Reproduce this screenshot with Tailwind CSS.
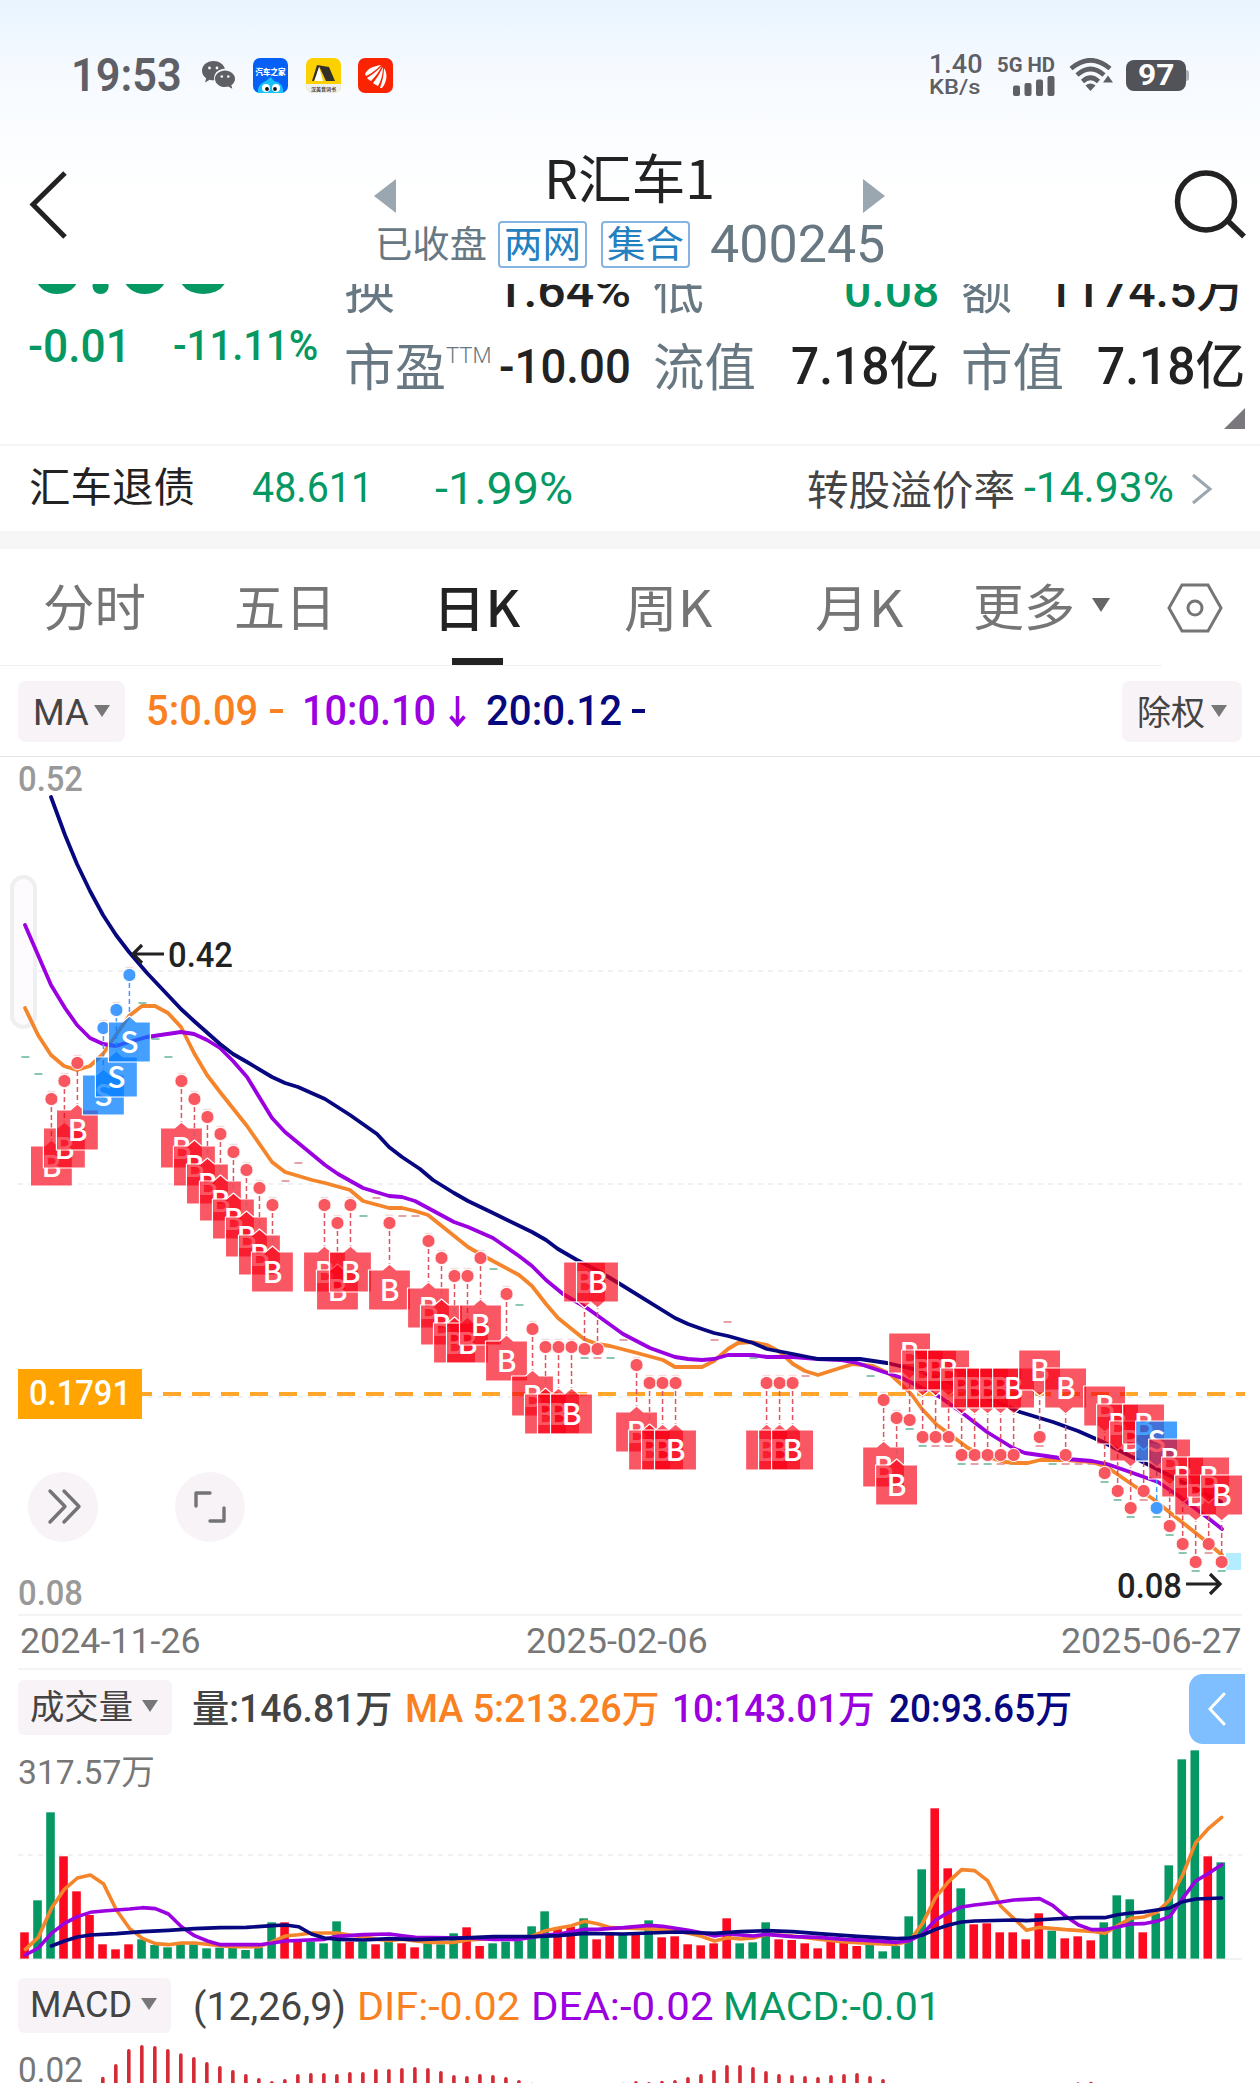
<!DOCTYPE html>
<html lang="zh-CN">
<head>
  <meta charset="UTF-8" />
  <meta name="viewport" content="width=device-width, initial-scale=1.0"/>
  <title>R汇车1 400245</title>
  <script src="https://cdn.jsdelivr.net/npm/@tailwindcss/browser@4"></script>
  <style>
    body {
      font-family: Roboto, 'Noto Sans CJK SC', sans-serif;
    }
    .cjk {
      font-family: 'Noto Sans CJK SC', sans-serif;
    }
    [data-w] {
      display: inline-block;
      white-space: nowrap;
      transform-origin: left center;
      flex-shrink: 0;
    }
  </style>
</head>
<body class="bg-white w-[1260px] h-[2083px] overflow-hidden text-[#222]">

  <!-- Status bar + title -->
  <header class="h-[284px] bg-linear-to-b from-[#e8f4ff] via-[#f6faff] via-25% to-white to-70%">
    <div class="flex items-center h-[150px] text-[#5f5f66]">
      <span data-w="111" class="ml-[71px] text-[46px] leading-none font-semibold">19:53</span>
      <svg class="ml-[20px] w-[33px] h-[28px]" viewBox="0 0 33 28" fill="#5f5f66">
        <path d="M11.500 0C5 0 0 4.300 0 9.700c0 3 1.600 5.700 4.200 7.500L3 21.500l4.700-2.700c1.200.4 2.500.5 3.800.5h.8c-1.300-6.500 4-11.600 10.600-11.500C21.800 3.300 17 0 11.500 0z"/>
        <path d="M33 17.700c0-4.600-4.500-8.300-10-8.300s-10 3.700-10 8.300 4.500 8.300 10 8.300c1.200 0 2.300-.2 3.300-.5l4 2.300-1-3.700c2.300-1.500 3.700-3.800 3.700-6.400z"/>
        <g fill="#f6faff"><circle cx="7.500" cy="7" r="1.400"/><circle cx="15" cy="7" r="1.400"/><circle cx="19.800" cy="15.500" r="1.300"/><circle cx="26.300" cy="15.500" r="1.300"/></g>
      </svg>
      <svg class="ml-[18px] w-[35px] h-[35px]" viewBox="0 0 35 35">
        <rect width="35" height="35" rx="7" fill="#0561f5"/>
        <text x="2.500" y="16.500" font-size="8" font-weight="900" fill="#fff" textLength="30" lengthAdjust="spacingAndGlyphs">汽车之家</text>
        <path d="M5 35c-1-8 5-11 8-12l4.500-4L21 23c5 1 10 4 9 12z" fill="#17c0f8"/>
        <circle cx="13" cy="30" r="4" fill="#fff"/><circle cx="23" cy="30" r="4" fill="#fff"/>
        <circle cx="14" cy="31" r="1.900" fill="#111"/><circle cx="22" cy="31" r="1.900" fill="#111"/>
      </svg>
      <svg class="ml-[18px] w-[35px] h-[35px]" viewBox="0 0 35 35">
        <rect width="35" height="35" rx="7" fill="#fdd000"/>
        <path d="M0 26h35v2a7 7 0 0 1-7 7H7a7 7 0 0 1-7-7z" fill="#efefef"/>
        <path d="M6 23L11 7l12 2 6 14h-9L13.500 9 8 23z" fill="#33302a"/>
        <path d="M8.500 23l4.500-14 4 14z" fill="#fff"/>
        <text x="5" y="33" font-size="5" font-weight="700" fill="#444" textLength="25" lengthAdjust="spacingAndGlyphs">汉英音词书</text>
      </svg>
      <svg class="ml-[17px] w-[35px] h-[35px]" viewBox="0 0 35 35">
        <rect width="35" height="35" rx="7" fill="#fa2403"/>
        <g fill="#fff">
          <path d="M7 16c2-5 8-8 16-9-4 4-10 9-15 11z"/>
          <path d="M9 20c5-3 10-7 15-12-3 6-7 11-11 15-2-1-3-2-4-3z"/>
          <path d="M15 25c4-5 7-10 10-16 0 7-2 14-5 19-2-1-4-2-5-3z"/>
          <path d="M22 30c2-6 4-13 4-20 4 6 3 14-2 20z"/>
        </g>
      </svg>
      <div class="ml-[536px] w-[54px] flex flex-col items-start font-medium">
        <span data-w="54" class="text-[26px] leading-[25px]">1.40</span>
        <span data-w="52" class="text-[21px] leading-[21px]">KB/s</span>
      </div>
      <div class="ml-[14px] w-[58px] flex flex-col">
        <span data-w="58" class="self-start text-[21px] leading-[20px] font-bold">5G HD</span>
        <svg class="ml-[16px] w-[42px] h-[20px] mt-[1px]" viewBox="0 0 42 20" fill="#5f5f66">
          <rect x="0" y="9.500" width="7" height="10.500" rx="2"/><rect x="11.500" y="7" width="7" height="13" rx="2"/>
          <rect x="23" y="3.500" width="7" height="16.500" rx="2"/><rect x="34.500" y="0" width="7" height="20" rx="2"/>
        </svg>
      </div>
      <svg class="ml-[14px] w-[44px] h-[34px]" viewBox="0 0 44 34" fill="none" stroke="#5f5f66" stroke-width="4.600">
        <path d="M2 10.500Q21.500-6 41 10.500"/>
        <path d="M8 17Q21.500 5 35 17"/>
        <path d="M13.500 23.500q8-7.500 16 0"/>
        <path d="M16.500 27.500q5-4 10 0L21.500 33z" fill="#5f5f66" stroke="none"/>
        <path d="M34 24.500l5-7 5 7z" fill="#5f5f66" stroke="none"/>
      </svg>
      <div class="ml-[13px] w-[60px] h-[31px] rounded-[8px] bg-[#525259] flex items-center text-white">
        <span data-w="36" class="ml-[12px] text-[30px] leading-none font-bold">97</span>
      </div>
      <div class="w-[3px] h-[11px] rounded-r-[3px] bg-[#aeb0b8]"></div>
    </div>

    <div class="flex items-start h-[134px] px-[28px]">
      <svg class="mt-[20px] w-[42px] h-[70px] shrink-0" viewBox="28 170 42 70" fill="none" stroke="#222" stroke-width="5">
        <path d="M65 173L33 204.500 65 237"/>
      </svg>
      <div class="ml-[304px] w-[512px] shrink-0 flex flex-col">
        <div class="flex h-[66px]">
          <svg class="mt-[29px] w-[22px] h-[34px] shrink-0" viewBox="0 0 22 34"><path d="M22 0v34L0 17z" fill="#9aa6b0"/></svg>
          <span data-w="171" class="cjk ml-[148px] -mt-[4px] text-[53px] leading-[60px]">R汇车1</span>
          <svg class="ml-[148px] mt-[29px] w-[22px] h-[34px] shrink-0" viewBox="0 0 22 34"><path d="M0 0v34l22-17z" fill="#9aa6b0"/></svg>
        </div>
        <div class="flex items-center h-[56px] text-[#687882]">
          <span data-w="112" class="mt-[2px] ml-[1px] text-[37px] leading-none">已收盘</span>
          <span class="ml-[11px] w-[89px] h-[47px] shrink-0 flex items-center rounded-[4px] border-2 border-[#86b4e2] text-[#2580c0]"><span data-w="77" class="ml-[4px] mt-[2px] text-[37px] leading-none">两网</span></span>
          <span class="ml-[14px] w-[89px] h-[47px] shrink-0 flex items-center rounded-[4px] border-2 border-[#86b4e2] text-[#2580c0]"><span data-w="77" class="ml-[4px] mt-[2px] text-[37px] leading-none">集合</span></span>
          <span data-w="175" class="mt-[1px] ml-[20px] text-[52px] leading-none">400245</span>
        </div>
      </div>
      <svg class="ml-auto mt-[18px] -mr-[16px] w-[76px] h-[72px] shrink-0" viewBox="1173 168 76 72" fill="none" stroke="#222" stroke-width="5.500">
        <circle cx="1207" cy="201.500" r="28.500"/><path d="M1229 221l16 15.500"/>
      </svg>
    </div>
  </header>

  <!-- Quote numbers, scrolled under the title -->
  <section class="flex h-[160px] overflow-hidden bg-white">
    <div class="w-[344px] shrink-0 pl-[28px] -mt-[83px] text-[#059862]">
      <div class="h-[110px]"><span data-w="204" class="text-[108px] leading-[110px] font-bold">0.08</span></div>
      <div class="mt-[5px] h-[60px] flex items-center font-medium">
        <span data-w="103" class="text-[46px] leading-none">-0.01</span>
        <span data-w="145" class="ml-[42px] text-[42px] leading-none">-11.11%</span>
      </div>
    </div>
    <div class="relative -mt-[32px] grid grid-cols-[287px_286px_284px] grid-rows-[77px_77px] gap-x-[22px] h-[190px] leading-none text-[46px] font-medium">
      <div class="flex items-center justify-between"><span class="mt-[2px] text-[51px] font-normal text-[#687882]">换</span><span data-w="136">1.64%</span></div>
      <div class="flex items-center justify-between"><span class="mt-[2px] text-[51px] font-normal text-[#687882]">低</span><span data-w="95" class="text-[#059862]">0.08</span></div>
      <div class="flex items-center justify-between"><span class="mt-[2px] text-[51px] font-normal text-[#687882]">额</span><span data-w="199">1174.5万</span></div>
      <div class="flex items-center"><span data-w="102" class="mt-[2px] text-[51px] font-normal text-[#687882]">市盈</span><span data-w="45" class="-mt-[24px] text-[22px] font-light text-[#687882]">TTM</span><span data-w="132" class="-mt-[2px] ml-auto text-[48px]">-10.00</span></div>
      <div class="flex items-center"><span data-w="103" class="mt-[2px] text-[51px] font-normal text-[#687882]">流值</span><span data-w="148" class="-mt-[2px] ml-auto text-[51px]">7.18亿</span></div>
      <div class="flex items-center"><span data-w="103" class="mt-[2px] text-[51px] font-normal text-[#687882]">市值</span><span data-w="148" class="-mt-[2px] ml-auto mr-[-2px] text-[51px]">7.18亿</span></div>
      <svg class="absolute right-0 top-[156px] w-[21px] h-[21px]" viewBox="0 0 21 21"><path d="M21 0v21H0z" fill="#7a787d"/></svg>
    </div>
  </section>

  <!-- Convertible bond -->
  <section class="flex items-center h-[87px] border-t-2 border-[#f5f5f5] leading-none text-[#059862]">
    <span data-w="166" class="ml-[29px] text-[41px] text-[#222]">汇车退债</span>
    <span data-w="121" class="-mt-[2px] ml-[57px] text-[42px]">48.611</span>
    <span data-w="138" class="ml-[62px] text-[45px]">-1.99%</span>
    <span data-w="208" class="mt-[5px] ml-[234px] text-[41px] text-[#444]">转股溢价率</span>
    <span data-w="150" class="-mt-[2px] ml-[9px] text-[42px]">-14.93%</span>
    <svg class="ml-[17px] w-[22px] h-[32px]" viewBox="0 0 22 32" fill="none" stroke="#9aa6b0" stroke-width="3"><path d="M2 2l17 14L2 30"/></svg>
  </section>
  <div class="h-[18px] bg-[#f6f6f6]"></div>

  <!-- Period tabs -->
  <nav class="flex items-center h-[117px] text-[50px] leading-none text-[#757575]">
    <span data-w="103" class="mt-[3px] ml-[43px]">分时</span>
    <span data-w="102" class="mt-[3px] ml-[88px]">五日</span>
    <div class="relative ml-[97px] w-[90px] h-[117px] shrink-0 flex items-center text-[#222] font-medium">
      <span data-w="87" class="cjk -mt-[5px]">日K</span>
      <div class="absolute left-[19px] bottom-[1px] w-[51px] h-[7px] bg-[#222]"></div>
    </div>
    <span data-w="88" class="cjk -mt-[5px] ml-[101px]">周K</span>
    <span data-w="88" class="cjk -mt-[5px] ml-[103px]">月K</span>
    <span data-w="102" class="mt-[3px] ml-[69px]">更多</span>
    <svg class="ml-[17px] -mt-[5px] w-[18px] h-[14px]" viewBox="0 0 18 14"><path d="M0 0h18L9 14z" fill="#666"/></svg>
    <svg class="ml-[57px] w-[56px] h-[50px]" viewBox="0 0 56 50" fill="none" stroke="#757575" stroke-width="3">
      <path d="M15 2h26l13 23-13 23H15L2 25z"/><circle cx="28" cy="25" r="7"/>
    </svg>
  </nav>
  <div class="w-[1162px] h-px -mt-px bg-[#f2f2f2]"></div>

  <!-- MA legend -->
  <section class="flex items-center h-[91px] border-b border-[#e3e3e3] leading-none text-[42px] font-medium">
    <div class="ml-[18px] w-[107px] h-[61px] rounded-[8px] bg-[#f7f3f7] flex items-center text-[#444] font-normal">
      <span data-w="56" class="mt-[2px] ml-[15px] text-[37px]">MA</span>
      <svg class="ml-[5px] w-[16px] h-[12px]" viewBox="0 0 16 12"><path d="M0 0h16L8 12z" fill="#777"/></svg>
    </div>
    <span data-w="112" class="ml-[21px] text-[#f98122]">5:0.09</span>
    <span class="ml-[12px] w-[13px] h-[4px] bg-[#f98122]"></span>
    <span data-w="134" class="ml-[19px] text-[#9a00e0]">10:0.10</span>
    <svg class="ml-[13px] w-[17px] h-[32px]" viewBox="0 0 17 32" fill="none" stroke="#9a00e0" stroke-width="3.500"><path d="M8.500 1v28M1.500 21.500l7 8 7-8"/></svg>
    <span data-w="136" class="ml-[20px] text-[#07077f]">20:0.12</span>
    <span class="ml-[10px] w-[13px] h-[4px] bg-[#07077f]"></span>
    <div class="ml-auto mr-[18px] w-[120px] h-[61px] rounded-[8px] bg-[#f7f3f7] flex items-center text-[#444] font-normal">
      <span data-w="68" class="mt-[3px] ml-[15px] text-[34px]">除权</span>
      <svg class="ml-[6px] w-[16px] h-[12px]" viewBox="0 0 16 12"><path d="M0 0h16L8 12z" fill="#777"/></svg>
    </div>
  </section>

  <!-- Price chart -->
  <svg class="block w-[1260px] h-[857px]" viewBox="0 757 1260 857" fill="none">
    <g stroke="#edf1f3" stroke-width="2" stroke-dasharray="5 5">
      <path d="M18 971H1242M18 1184H1242M18 1397H1242"/>
    </g>
    <rect x="12" y="877" width="23" height="150" rx="11.500" stroke="#efeff1" stroke-width="4" fill="#fdfbfe"/>
    <g id="ticks" stroke-width="1.500"></g>
    <g stroke-width="3.800" stroke-linejoin="round" stroke-linecap="round">
      <polyline stroke="#f5852b" points="25,1008 38,1035 51,1055 64,1066 77,1070 90,1066 103,1054 116,1035 129,1016 142,1006 155,1006 168,1013 181,1027 194,1053 207,1075 220,1092 247,1126 272,1162 285,1172 312,1180 325,1183 350,1190 363,1201 389,1208 402,1208 415,1211 428,1215 468,1247 480,1254 519,1275 532,1286 546,1304 558,1318 584,1339 597,1344 610,1346 637,1353 663,1360 675,1367 702,1367 714,1361 728,1349 738,1343 752,1342 767,1345 780,1352 793,1364 805,1371 818,1375 840,1368 853,1364 873,1366 890,1374 902,1385 912,1395 922,1409 937,1425 948,1433 968,1448 987,1457 1005,1462 1017,1463 1028,1463 1040,1460 1067,1460 1092,1462 1107,1467 1130,1483 1153,1499 1173,1515 1202,1538 1222,1555"/>
      <polyline stroke="#9a00e0" points="25,925 51,985 65,1008 77,1025 90,1038 103,1044 116,1046 129,1042 147,1037 181,1032 194,1034 207,1040 220,1048 233,1061 247,1077 272,1118 285,1132 325,1165 338,1174 363,1188 389,1196 402,1197 415,1201 454,1222 468,1227 493,1238 519,1256 532,1266 546,1280 563,1294 587,1308 623,1334 650,1348 675,1357 688,1359 702,1360 714,1359 728,1355 753,1355 767,1357 793,1357 818,1359 840,1360 857,1363 890,1374 902,1378 920,1387 940,1397 965,1415 987,1432 1013,1448 1025,1453 1067,1459 1092,1461 1107,1464 1130,1472 1158,1482 1180,1497 1208,1518 1222,1529"/>
      <polyline stroke="#07077f" points="51,797 65,835 77,864 90,891 103,915 116,935 129,952 147,973 181,1009 194,1021 220,1044 233,1054 247,1062 272,1077 285,1083 298,1087 325,1099 350,1115 377,1134 389,1147 402,1157 420,1169 433,1180 454,1193 468,1201 493,1213 532,1232 546,1240 558,1249 577,1260 600,1272 620,1284 675,1318 688,1324 702,1329 714,1333 728,1336 753,1343 767,1349 793,1354 818,1359 860,1359 887,1363 913,1369 960,1386 1020,1412 1053,1422 1078,1431 1103,1442 1130,1456 1147,1464 1186,1484 1221,1502"/>
    </g>
    <path d="M134 1394H1245" stroke="#ffa62b" stroke-width="4" stroke-dasharray="18 11"/>
    <rect x="1226" y="1553" width="15" height="17" fill="#b3edff"/>
    <g id="markers"></g>
    <g stroke="#222" stroke-width="3.200">
      <path d="M164 954H133M142 945l-9 9 9 9"/>
      <path d="M1186 1584h34M1210 1574l10 10-10 10"/>
    </g>
    <g font-size="35" font-weight="500">
      <text x="18" y="791" fill="#999" textLength="65" lengthAdjust="spacingAndGlyphs">0.52</text>
      <text x="18" y="1605" fill="#999" textLength="65" lengthAdjust="spacingAndGlyphs">0.08</text>
      <text x="168" y="967" fill="#222" textLength="65" lengthAdjust="spacingAndGlyphs">0.42</text>
      <text x="1117" y="1598" fill="#222" textLength="65" lengthAdjust="spacingAndGlyphs">0.08</text>
      <rect x="18" y="1369" width="124" height="50" fill="#ffa400"/>
      <text x="29" y="1405" fill="#fff" textLength="102" lengthAdjust="spacingAndGlyphs">0.1791</text>
    </g>
    <circle cx="63" cy="1507" r="35" fill="#f7f3f7"/>
    <circle cx="210" cy="1507" r="35" fill="#f7f3f7"/>
    <g stroke="#747474" stroke-width="3.400" stroke-linecap="round" stroke-linejoin="round">
      <path d="M50 1491l15 15.500L50 1522M64 1491l15 15.500L64 1522"/>
      <path d="M196 1506v-13h14M224 1508v13h-14"/>
    </g>
  </svg>

  <!-- Date axis -->
  <div class="mx-[18px] h-[56px] border-y-2 border-[#f4f4f2] flex items-center leading-none text-[35px] text-[#777]">
    <span data-w="181" class="-mt-[2px] ml-[2px]">2024-11-26</span>
    <span data-w="182" class="-mt-[2px] ml-[325px]">2025-02-06</span>
    <span data-w="181" class="-mt-[2px] ml-auto">2025-06-27</span>
  </div>

  <!-- Volume -->
  <section class="flex items-center h-[78px] leading-none text-[38px] font-medium">
    <div class="ml-[18px] -mt-[4px] w-[154px] h-[55px] rounded-[6px] bg-[#f7f3f7] flex items-center text-[#444] font-normal">
      <span data-w="103" class="ml-[12px] text-[34px]">成交量</span>
      <svg class="ml-[9px] -mt-[3px] w-[16px] h-[12px]" viewBox="0 0 16 12"><path d="M0 0h16L8 12z" fill="#777"/></svg>
    </div>
    <span data-w="201" class="ml-[20px] text-[#444]">量:146.81万</span>
    <span data-w="254" class="ml-[12px] text-[#f98122]">MA 5:213.26万</span>
    <span data-w="203" class="ml-[13px] text-[#9a00e0]">10:143.01万</span>
    <span data-w="183" class="ml-[14px] text-[#07077f]">20:93.65万</span>
    <div class="ml-auto mr-[15px] w-[56px] h-[70px] rounded-l-[14px] bg-[#7fbfff] flex items-center justify-center">
      <svg class="-ml-[1px] w-[18px] h-[34px]" viewBox="0 0 18 34" fill="none" stroke="#fff" stroke-width="3" stroke-linecap="round"><path d="M16 2L2 17l14 15"/></svg>
    </div>
  </section>
  <svg class="block w-[1260px] h-[212px]" viewBox="0 1748 1260 212" fill="none">
    <path d="M18 1855H1242" stroke="#f1f1f1" stroke-width="2" stroke-dasharray="5 5"/>
    <path d="M18 1959H1242" stroke="#f1edf0" stroke-width="1.500"/>
    <text x="18" y="1784" font-size="34" fill="#777" textLength="137" lengthAdjust="spacingAndGlyphs">317.57万</text>
    <g id="volume"></g>
    <g id="volume-ma" stroke-width="3.600" stroke-linejoin="round" stroke-linecap="round"></g>
  </svg>

  <!-- MACD -->
  <section class="flex items-center h-[90px] leading-none text-[39px]">
    <div class="ml-[18px] w-[153px] h-[55px] rounded-[6px] bg-[#f7f3f7] flex items-center text-[#444]">
      <span data-w="102" class="ml-[12px] text-[36px]">MACD</span>
      <svg class="ml-[9px] -mt-[3px] w-[16px] h-[12px]" viewBox="0 0 16 12"><path d="M0 0h16L8 12z" fill="#777"/></svg>
    </div>
    <span data-w="153" class="mt-[4px] ml-[22px] text-[#444]">(12,26,9)</span>
    <span data-w="163" class="mt-[4px] ml-[11px] text-[#f98122]">DIF:-0.02</span>
    <span data-w="182" class="mt-[4px] ml-[11px] text-[#9a00e0]">DEA:-0.02</span>
    <span data-w="218" class="mt-[4px] ml-[10px] text-[#059862]">MACD:-0.01</span>
  </section>
  <svg class="block w-[1260px] h-[33px] overflow-visible" viewBox="0 2050 1260 33" fill="none">
    <text x="18" y="2082" font-size="35" fill="#777" textLength="65" lengthAdjust="spacingAndGlyphs">0.02</text>
    <g id="macd" stroke="#d42a36" stroke-width="3.600" stroke-linecap="round"></g>
  </svg>

  <script>
    // squeeze each label to the width of its slot
    const fit = el => {
      const natural = el.offsetWidth;
      const w = Number(el.dataset.w);
      if (!natural) return;
      el.style.transform = `scaleX(${w / natural})`;
      el.style.marginRight = `${w - natural}px`;
    };
    const sizes = new ResizeObserver(entries => entries.forEach(e => fit(e.target)));
    document.querySelectorAll('[data-w]').forEach(el => sizes.observe(el));
    window.addEventListener('load', () => document.querySelectorAll('[data-w]').forEach(fit));

    const GREEN = '#059862';
    const RED = '#fb0a20';
    const x = i => 25.4 + i * 13.003;

    // trade markers: [index, dot y, side, letter], side 1 = box under the dot, -1 = over it
    const trades = [
      [2,1099,1,'B'],[3,1081,1,'B'],[4,1063,1,'B'],[6,1028,1,'S'],[7,1010,1,'S'],[8,975,1,'S'],
      [12,1081,1,'B'],[13,1099,1,'B'],[14,1117,1,'B'],[15,1134,1,'B'],[16,1152,1,'B'],[17,1170,1,'B'],[18,1188,1,'B'],[19,1205,1,'B'],
      [23,1205,1,'B'],[24,1223,1,'B'],[25,1205,1,'B'],[28,1223,1,'B'],
      [31,1241,1,'B'],[32,1258,1,'B'],[33,1276,1,'B'],[34,1276,1,'B'],[35,1258,1,'B'],[37,1294,1,'B'],
      [39,1329,1,'B'],[40,1347,1,'B'],[41,1347,1,'B'],[42,1347,1,'B'],[43,1349,-1,'B'],[44,1349,-1,'B'],
      [47,1365,1,'B'],[48,1383,1,'B'],[49,1383,1,'B'],[50,1383,1,'B'],[57,1383,1,'B'],[58,1383,1,'B'],[59,1383,1,'B'],
      [66,1400,1,'B'],[67,1418,1,'B'],[68,1420,-1,'B'],[69,1437,-1,'B'],[70,1437,-1,'B'],[71,1437,-1,'B'],
      [72,1455,-1,'B'],[73,1455,-1,'B'],[74,1455,-1,'B'],[75,1455,-1,'B'],[76,1455,-1,'B'],[78,1437,-1,'B'],[80,1455,-1,'B'],
      [83,1473,-1,'B'],[84,1491,-1,'B'],[85,1508,-1,'B'],[86,1491,-1,'B'],[87,1508,-1,'S'],[88,1526,-1,'B'],
      [89,1544,-1,'B'],[90,1562,-1,'B'],[91,1544,-1,'B'],[92,1562,-1,'B']
    ];
    const redDays = [44, 70, 71, 73, 75, 78, 80, 86, 91];

    let ticks = '';
    const tick = (cx, y, color, o) => {
      ticks += `<path d="M${cx - 4} ${y}h8" stroke="${color}" stroke-opacity="${o}"/>`;
    };
    document.getElementById('markers').innerHTML = trades.map(([i, y, side, letter]) => {
      const cx = x(i);
      const buy = letter === 'B';
      const fill = buy ? 'rgba(248,0,20,.66)' : 'rgba(0,124,255,.73)';
      const dot = buy ? '#f9575f' : '#449bff';
      const top = side > 0 ? y + 47 : y - 87;
      const L = cx - 21, R = cx + 21, B = top + 40;
      const box = side > 0
        ? `M${L} ${top}H${cx - 7}L${cx} ${top - 6}L${cx + 7} ${top}H${R}V${B}H${L}Z`
        : `M${L} ${top}H${R}V${B}H${cx + 7}L${cx} ${B + 6}L${cx - 7} ${B}H${L}Z`;
      if (side > 0) tick(cx, y - 7.5, '#d98a8e', 0.3);
      else tick(cx, y + 9, redDays.includes(i) ? '#d5676e' : '#3fa07e', 0.8);
      return `<path d="M${cx} ${y}V${side > 0 ? top - 6 : B + 6}" stroke="${buy ? '#dc5560' : '#449bff'}" stroke-width="1.5" stroke-dasharray="5 3"/>
        <circle cx="${cx}" cy="${y}" r="6.6" fill="${dot}" stroke="#fff" stroke-width="1"/>
        <path d="${box}" fill="${fill}" stroke="#fff" stroke-width="1.2" stroke-linejoin="round"/>
        <text x="${cx}" y="${top + 31}" font-size="30" font-weight="500" text-anchor="middle" fill="#fff" class="cjk">${letter}</text>`;
    }).join('');

    // one-price days without a marker
    [[0,1057,1],[1,1074,1],[9,1003,1],[10,1039,1],[11,1057,1],[20,1181,0],[21,1163,0],[26,1216,1],[27,1198,0],[29,1216,0],[30,1216,0],
     [36,1269,1],[38,1305,1],[45,1358,1],[46,1340,0],[53,1340,0],[54,1322,0],[56,1358,1],[60,1376,0],[65,1376,1],[79,1464,1],[81,1464,0],[82,1464,0]]
      .forEach(([i, y, down]) => tick(x(i), y, down ? '#3fa07e' : '#d5676e', 0.8));
    document.getElementById('ticks').innerHTML = ticks;

    // volume bars, tops in 1/3 px below y=1660
    const vy = t => 1660 + t / 3;
    const tops = [817,721,457,589,694,765,853,868,853,838,855,862,853,853,865,863,862,870,862,787,787,843,845,850,784,845,845,853,838,850,862,
      850,853,820,802,858,850,845,843,799,754,805,800,775,838,823,825,825,781,832,829,853,856,850,775,850,847,787,838,840,850,865,845,848,858,
      853,874,858,769,628,445,625,685,793,790,817,817,838,760,812,835,829,841,787,706,718,817,760,616,298,271,589,607];
    const dirs = 'rggrrrrrrggggggggggrrggg'.slice(0, 0) + tops.map((_, i) =>
      [0,3,4,5,6,7,8,20,21,25,27,29,30,34,35,41,42,44,45,47,49,50,51,52,53,54,58,59,60,61,62,63,64,70,71,73,74,75,76,77,78,80,81,82,86,91].includes(i) ? 'r' : 'g').join('');
    document.getElementById('volume').innerHTML = tops.map((t, i) =>
      `<rect x="${x(i) - 5.2}" y="${vy(t)}" width="8.6" height="${1958.6 - vy(t)}" fill="${dirs[i] === 'r' ? RED : GREEN}"/>`
    ).join('');

    const ma = {
      '#f5852b': [[0,868],[1,832],[2,745],[3,688],[4,654],[5,645],[6,671],[7,750],[8,805],[9,835],[10,851],[11,854],[12,849],[13,849],[14,853],[15,857],[16,860],[18,860],[19,845],[20,828],[21,824],[22,819],[24,819],[25,826],[26,830],[27,838],[28,842],[29,838],[30,843],[31,847],[33,847],[34,840],[36,836],[38,837],[39,828],[40,812],[41,804],[42,797],[43,784],[44,791],[45,803],[47,805],[49,808],[50,812],[51,820],[52,829],[53,843],[54,833],[55,837],[56,834],[57,823],[59,828],[61,838],[63,846],[65,850],[67,853],[68,842],[69,790],[70,712],[71,665],[72,629],[73,632],[74,662],[75,738],[76,775],[77,811],[78,802],[80,809],[82,814],[83,820],[84,797],[85,775],[86,771],[87,757],[88,720],[89,645],[90,548],[91,505],[92,472]],
      '#9a00e0': [[0,885],[1,864],[2,820],[3,790],[4,770],[5,757],[6,753],[8,747],[9,743],[10,746],[11,762],[12,800],[13,827],[14,843],[15,854],[18,854],[19,849],[20,843],[23,838],[24,829],[26,824],[28,822],[29,827],[30,832],[34,834],[36,838],[38,838],[39,832],[40,825],[41,822],[42,815],[43,808],[44,808],[46,803],[48,796],[49,799],[50,805],[51,811],[52,818],[53,828],[54,822],[56,828],[57,823],[59,830],[61,832],[63,838],[65,842],[67,847],[68,842],[69,822],[70,780],[71,757],[72,741],[73,735],[75,726],[76,720],[78,716],[79,736],[80,769],[81,795],[82,809],[83,809],[84,801],[85,792],[86,791],[87,784],[88,770],[89,715],[90,663],[91,640],[92,614]],
      '#07077f': [[2,858],[3,843],[4,831],[5,825],[7,821],[9,815],[11,811],[13,806],[15,803],[17,802],[19,797],[20,795],[21,800],[22,822],[23,834],[24,838],[26,840],[28,836],[30,839],[33,835],[36,830],[39,830],[41,827],[43,820],[46,822],[50,816],[53,820],[55,815],[57,812],[59,815],[61,821],[64,829],[67,836],[68,834],[69,825],[70,808],[71,795],[72,786],[73,783],[76,780],[77,782],[79,777],[81,773],[83,773],[84,764],[85,759],[86,756],[88,744],[89,725],[90,717],[92,714]]
    };
    document.getElementById('volume-ma').innerHTML = Object.entries(ma).map(([color, pts]) =>
      `<polyline stroke="${color}" points="${pts.map(([i, t]) => `${x(i)},${vy(t)}`).join(' ')}"/>`
    ).join('');

    const macd = {
      6: [1250,1212,1167,1155,1158,1167,1180,1191,1206,1218,1230,1242,1254,1263,1257,1242,1239,1239,1242,1236,1236,1227,1227,1224,1221,1224,1233,1245,1248,1242,1245,1251,1260,1268],
      46: [1268,1263,1266,1262,1260,1251,1242,1230,1215,1215,1221,1233,1242,1245,1248,1251,1245,1242,1239,1248,1257],
      81: [1267,1265]
    };
    document.getElementById('macd').innerHTML = Object.entries(macd).map(([start, list]) =>
      list.map((t, k) => `<path d="M${x(Number(start) + k) - 0.6} ${vy(t) + 1.8}V2090"/>`).join('')
    ).join('');
  </script>

</body>
</html>
